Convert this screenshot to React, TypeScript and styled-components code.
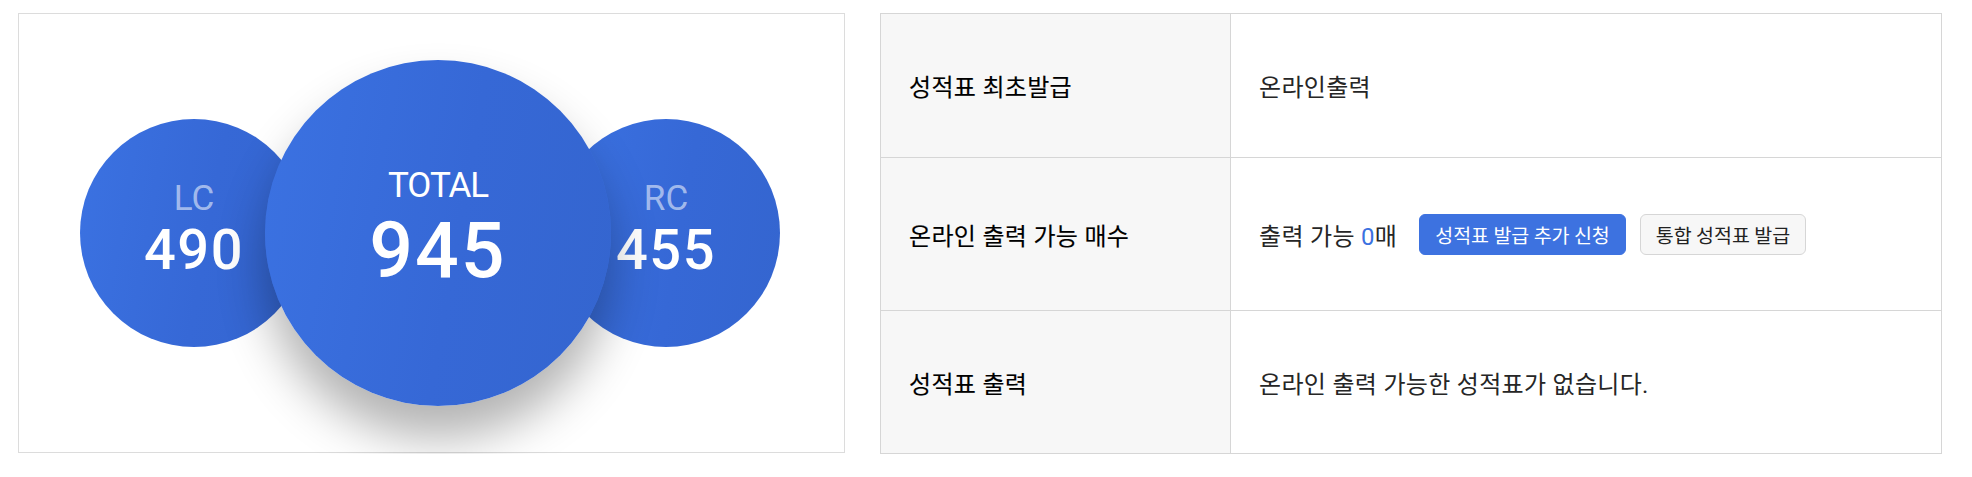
import React from "react";
import styled, { createGlobalStyle } from "styled-components";

const GlobalStyle = createGlobalStyle`
  html, body {
    margin: 0;
    padding: 0;
    background: #ffffff;
  }
  body {
    font-family: Roboto, "Noto Sans CJK KR", sans-serif;
    color: #222222;
  }
`;

const Page = styled.div`
  display: flex;
  align-items: flex-start;
  gap: 35px;
  padding: 13px 0 0 18px;
`;

const ScorePanel = styled.section`
  box-sizing: border-box;
  width: 827px;
  height: 440px;
  border: 1px solid #dcdcdc;
  display: flex;
  align-items: center;
  padding-left: 61px;
`;

const Circle = styled.div<{ $size: number; $overlap: number; $main?: boolean }>`
  position: relative;
  flex: none;
  box-sizing: border-box;
  width: ${(p) => p.$size}px;
  height: ${(p) => p.$size}px;
  margin-left: ${(p) => -p.$overlap}px;
  border-radius: 50%;
  background: linear-gradient(100deg, #3b72e2 0%, #3668d6 55%, #3465cf 100%);
  display: flex;
  flex-direction: column;
  align-items: center;
  justify-content: center;
  padding-bottom: ${(p) => (p.$main ? 10 : 8)}px;
  color: #ffffff;
  font-family: Roboto, sans-serif;
  z-index: ${(p) => (p.$main ? 2 : 1)};
  box-shadow: ${(p) => (p.$main ? "0 32px 48px rgba(0, 0, 0, 0.3)" : "none")};
`;

const Label = styled.div<{ $main?: boolean }>`
  font-size: 35px;
  line-height: 40px;
  letter-spacing: ${(p) => (p.$main ? "-1px" : "0")};
  color: ${(p) => (p.$main ? "#ffffff" : "rgba(255, 255, 255, 0.55)")};
`;

const Score = styled.div<{ $main?: boolean }>`
  font-size: ${(p) => (p.$main ? 77 : 56)}px;
  line-height: ${(p) => (p.$main ? 80 : 60)}px;
  letter-spacing: ${(p) => (p.$main ? 2 : 1.5)}px;
  margin-top: ${(p) => (p.$main ? 5 : 1)}px;
  font-weight: 500;
`;

const InfoTable = styled.table`
  width: 1062px;
  border-collapse: collapse;
  border: 1px solid #d6d6d6;
  font-family: Roboto, "Noto Sans CJK KR", sans-serif;
  font-size: 24px;
  letter-spacing: 0.3px;
  color: #262626;
`;

const Row = styled.tr<{ $h: number }>`
  height: ${(p) => p.$h}px;
`;

const HeadCell = styled.th`
  width: 350px;
  box-sizing: border-box;
  padding: 0 28px;
  background: #f7f7f7;
  border: 1px solid #d6d6d6;
  text-align: left;
  font-weight: 400;
  color: #000000;
  -webkit-text-stroke: 0.12px #000000;
  vertical-align: middle;
`;

const ValueCell = styled.td`
  padding: 0 28px;
  border: 1px solid #d6d6d6;
  vertical-align: middle;
  font-weight: 400;
`;

const Inline = styled.div`
  display: flex;
  align-items: center;
`;

const Count = styled.span`
  color: #3b71e0;
  font-family: Roboto, sans-serif;
`;

const Note = styled.span`
  margin-right: 22px;
`;

const Button = styled.button<{ $primary?: boolean }>`
  box-sizing: border-box;
  height: 41px;
  padding: 0 15px;
  margin-right: 14px;
  border-radius: 6px;
  border: 1px solid ${(p) => (p.$primary ? "#3d72e0" : "#d6d6d6")};
  background: ${(p) => (p.$primary ? "#3d72e0" : "#f7f7f7")};
  color: ${(p) => (p.$primary ? "#ffffff" : "#222222")};
  font-family: "Noto Sans CJK KR", sans-serif;
  font-size: 19.5px;
  cursor: pointer;
`;

export default function App() {
  return (
    <>
      <GlobalStyle />
      <Page>
        <ScorePanel>
          <Circle $size={228} $overlap={0}>
            <Label>LC</Label>
            <Score>490</Score>
          </Circle>
          <Circle $size={346} $overlap={43} $main>
            <Label $main>TOTAL</Label>
            <Score $main>945</Score>
          </Circle>
          <Circle $size={228} $overlap={59}>
            <Label>RC</Label>
            <Score>455</Score>
          </Circle>
        </ScorePanel>
        <InfoTable>
          <tbody>
            <Row $h={144}>
              <HeadCell>성적표 최초발급</HeadCell>
              <ValueCell>온라인출력</ValueCell>
            </Row>
            <Row $h={153}>
              <HeadCell>온라인 출력 가능 매수</HeadCell>
              <ValueCell>
                <Inline>
                  <Note>
                    출력 가능 <Count>0</Count>매
                  </Note>
                  <Button $primary>성적표 발급 추가 신청</Button>
                  <Button>통합 성적표 발급</Button>
                </Inline>
              </ValueCell>
            </Row>
            <Row $h={143}>
              <HeadCell>성적표 출력</HeadCell>
              <ValueCell>온라인 출력 가능한 성적표가 없습니다.</ValueCell>
            </Row>
          </tbody>
        </InfoTable>
      </Page>
    </>
  );
}
